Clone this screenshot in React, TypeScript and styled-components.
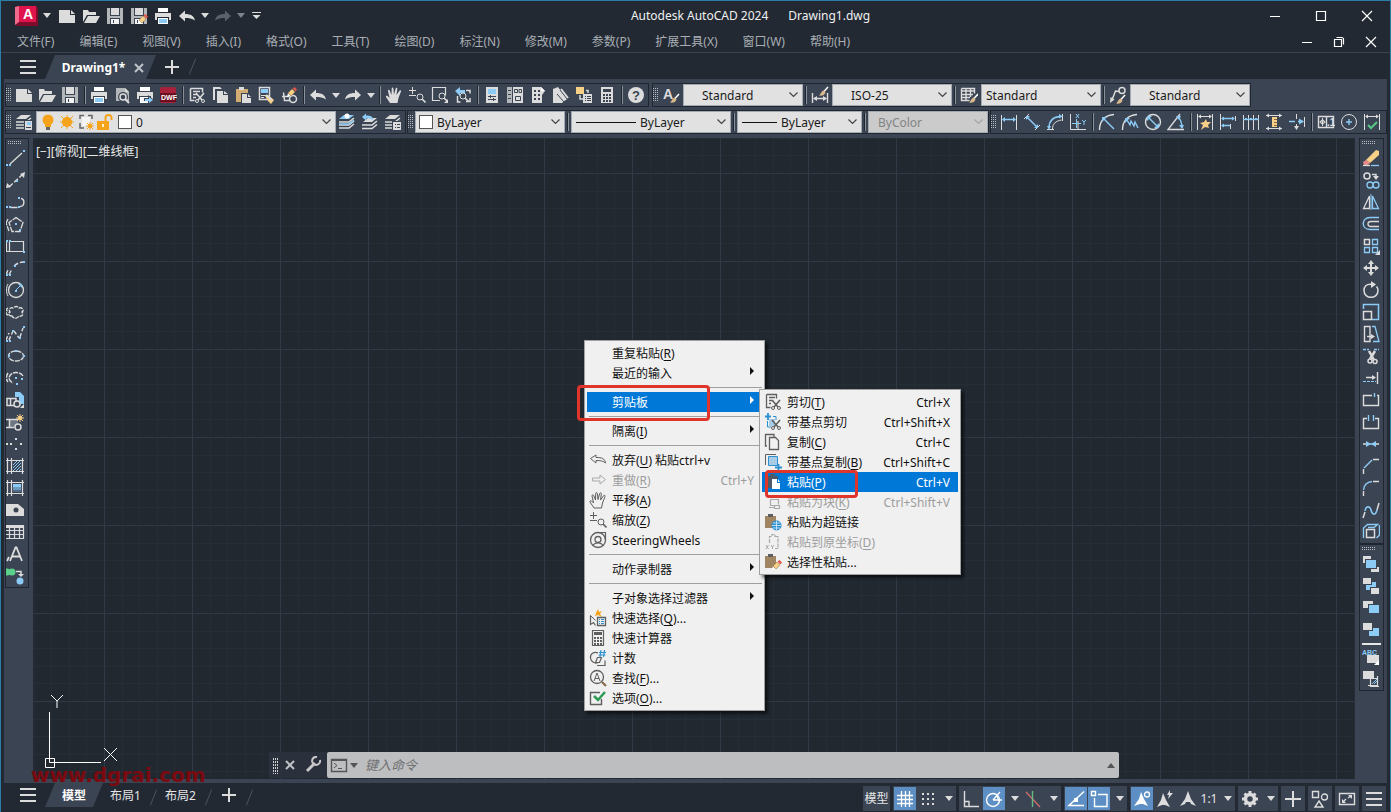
import React, { ReactNode } from "react";
import styled, { createGlobalStyle, css } from "styled-components";

const color = {
  frame: "#222933",
  slate: "#3b4453",
  edge: "#1f2630",
  canvas: "#212830",
  accent: "#5e8fc4",
  menu: "#f0f0f0",
  select: "#0078d7",
};

const W = "#dcdcdc";
const B = "#8ccbf5";
const Y = "#f7cf87";
const O = "#f5a31a";
const G = "#5f5f5f";
const K = "#2b8fd0";

const GlobalStyle = createGlobalStyle`
  * { box-sizing: border-box; }
  html, body { margin: 0; padding: 0; background: ${color.frame}; }
  body, button, select, input {
    font-family: "Noto Sans", "Noto Sans CJK SC", sans-serif;
    font-size: 12px;
    line-height: 16px;
  }
  button { border: 0; padding: 0; margin: 0; background: none; color: inherit; }
  ul { list-style: none; margin: 0; padding: 0; }
`;

/* ---------- drawing helpers ---------- */

const L = ({ d, c = W, w = 1, dash }: { d: string; c?: string; w?: number; dash?: string }) => (
  <path d={d} stroke={c} strokeWidth={w} strokeDasharray={dash} fill="none" />
);
const F = ({ d, c = W }: { d: string; c?: string }) => <path d={d} fill={c} />;
const R = ({ x, y, w, h, c = W }: { x: number; y: number; w: number; h: number; c?: string }) => (
  <rect x={x} y={y} width={w} height={h} fill={c} />
);
const Dots = ({ at, c = B }: { at: number[][]; c?: string }) => (
  <>
    {at.map(([x, y]) => (
      <rect key={`${x}-${y}`} x={x} y={y} width={2} height={2} fill={c} />
    ))}
  </>
);
const Lens = ({ x, y, c = W }: { x: number; y: number; c?: string }) => (
  <g stroke={c} fill="none">
    <circle cx={x} cy={y} r={3} />
    <path d={`M${x + 2} ${y + 2}l3.5 3.5`} strokeWidth={1.6} />
  </g>
);
const Pencil = ({ x, y }: { x: number; y: number }) => (
  <g transform={`translate(${x} ${y})`}>
    <path d="M0 10l1-4 3 3z" fill="#fff" />
    <path d="M1 6l4-4 3 3-4 4z" fill={Y} stroke="#8a6a3a" strokeWidth={0.5} />
    <path d="M5.500 1.500l2-1.500 2.500 2.500-1.500 2z" fill="#e2574c" />
  </g>
);
const Brush = ({ x, y }: { x: number; y: number }) => (
  <g transform={`translate(${x} ${y})`}>
    <path d="M9 0L5 4.500" stroke="#fff" strokeWidth={1.5} />
    <path d="M5 3.500l1.500 2C5.500 8.500 3 9 0 8.500 2 7.500 2 4 5 3.500z" fill="#d9b98c" />
  </g>
);
const Scissors = ({ x, y, c = W }: { x: number; y: number; c?: string }) => (
  <g transform={`translate(${x} ${y})`} stroke={c} fill="none">
    <path d="M1 0l6 7M9 0L3 7" strokeWidth={1.6} />
    <circle cx={2} cy={8} r={1.500} />
    <circle cx={8} cy={8} r={1.500} />
  </g>
);
const Sheets = ({ top = W }: { top?: string }) => (
  <>
    <F d="M6 2h10l-5 4H1z" c={top} />
    <L d="M1 9h10l5-4M1 12h10l5-4M1 15h10l5-4" w={1.6} />
  </>
);
const Spark = ({ x, y, c = Y, r = 4 }: { x: number; y: number; c?: string; r?: number }) => (
  <g>
    <circle cx={x} cy={y} r={r - 2} fill={c} />
    <path
      d={`M${x - r} ${y}h${2 * r}M${x} ${y - r}v${2 * r}M${x - r + 1} ${y - r + 1}l${2 * r - 2} ${2 * r - 2}M${x + r - 1} ${y - r + 1}l${2 - 2 * r} ${2 * r - 2}`}
      stroke={c}
    />
  </g>
);
const Floppy = () => (
  <>
    <R x={1} y={1} w={16} h={16} c="#b4b7ba" />
    <R x={4} y={1} w={10} h={8} c={color.slate} />
    <R x={5} y={1} w={8} h={7} c={W} />
    <R x={4} y={11} w={10} h={6} c={color.slate} />
    <R x={5} y={12} w={8} h={5} c="#f2f2f2" />
    <R x={7} y={13} w={1} h={3} c={color.slate} />
  </>
);
const Printer = ({ paper = B }: { paper?: string }) => (
  <>
    <R x={4} y={1} w={10} h={4} c="#fff" />
    <F d="M1 6h16v7h-2v-3H3v3H1z" />
    <R x={4} y={11} w={10} h={6} c="#fff" />
    <R x={5} y={12} w={8} h={4} c={paper} />
  </>
);
const Calculator = ({ c = W, k = color.slate }: { c?: string; k?: string }) => (
  <>
    <R x={3} y={1} w={12} h={16} c={c} />
    <R x={5} y={3} w={8} h={3} c={k} />
    {[8, 11, 14].map((y) =>
      [5, 8, 11].map((x) => <rect key={`${x}${y}`} x={x} y={y} width={2} height={2} fill={k} />)
    )}
  </>
);
const Letters = ({ x, y, s, c = W, children }: { x: number; y: number; s: number; c?: string; children: string }) => (
  <text x={x} y={y} fontSize={s} fontWeight={700} fill={c} fontFamily="Liberation Sans, sans-serif">
    {children}
  </text>
);
const UNDO = "M1 9l6-5.500v3.500c6 0 9 2 10 6.500-3-2-6-2.500-10-2.500v3.500z";
const REDO = "M17 9l-6-5.500v3.500c-6 0-9 2-10 6.500 3-2 6-2.500 10-2.500v3.500z";
const HAND =
  "M5 17L1 11c-.5-1 .8-1.800 1.600-1l2 2L3 5c-.2-1.200 1.300-1.600 1.700-.5L6.500 9 6.700 2.500c0-1.200 1.600-1.200 1.700 0L9 8.500l1.700-6c.3-1.100 1.800-.8 1.600.4L11.500 9l3-4.300c.7-1 2-.2 1.500.9L13.500 12l-1 5z";
const SHIP = "M9 1l3 8 5 7-5-2-1-2H7l-1 2-5 2 5-7z";

/* ---------- icon set ---------- */

const icons: Record<string, ReactNode> = {
  new: <F d="M1 3h11v5h5v8H1zM13 3l4 4h-4z" />,
  open: <F d="M1 3h5l1 2h7v3H5l-4 7zM6 9h12l-4 7H2z" />,
  save: <Floppy />,
  saveAs: <><Floppy /><Pencil x={8} y={7} /></>,
  print: <Printer />,
  preview: <><F d="M3 2h9l4 4v9H3z" c="#b4b7ba" /><F d="M12 2l4 4h-4z" /><circle cx={10} cy={11} r={5} fill={color.slate} /><circle cx={10} cy={11} r={3} fill="none" stroke={W} strokeWidth={1.500} /><L d="M12 13l4 4" w={2} /></>,
  publish: <><Printer paper="#f2f2f2" /><F d="M8 12h4V9l6 5-6 4v-3H8z" c={color.slate} /><F d="M9 13h4v-2l4 3-4 3v-2H9z" c={B} /></>,
  dwf: <><rect x={1} y={1} width={16} height={16} rx={2} fill="#a8213a" /><R x={1} y={7} w={16} h={9} c="#6b0f1f" /><Letters x={2} y={14} s={7} c="#fff">DWF</Letters></>,
  cut: <><L d="M2.500 2.500h12v4M2.500 2.500v12h4M5 5.500h7M5 8.500h4M5 11.500h3" w={1.500} /><Scissors x={7} y={7} /></>,
  copy: <><F d="M2 1h7l2 2H4v11H2z" /><F d="M6 5h6v4h5v8H6zM13 5l4 3h-4z" /></>,
  paste: <><F d="M2 3h12v4H7v9H2z" c="#d3ac74" /><R x={5} y={1} w={5} h={3} /><F d="M8 8h5v4h4v5H8zM14 8l3 3h-3z" /></>,
  match: <><L d="M2.500 1.500h10v12h-10z" w={1.500} /><R x={4} y={3} w={7} h={4} c={B} /><L d="M4 9.500h5M4 11.500h3" /><F d="M8 10l3-1 6 5-3 4-3-3z" c={Y} /><L d="M9 9l6 5" w={2} /></>,
  blockEdit: <><L d="M2 10.500h7M3.500 6.500l1 8h6" w={1.500} /><circle cx={13} cy={13} r={3.500} fill="none" stroke={W} strokeWidth={1.500} /><Pencil x={7} y={1} /></>,
  undo: <F d={UNDO} />,
  redo: <F d={REDO} />,
  redoDim: <F d={REDO} c="#5b616a" />,
  pan: <F d={HAND} />,
  zoomRt: <><L d="M4.500 1v7M1 4.500h7M1 9.500h7" /><Lens x={12} y={11} /></>,
  zoomWin: <><L d="M9 14.500H1.500v-13h13v8" w={1.200} /><Lens x={11} y={10} /><F d="M17 13v4h-4z" /></>,
  zoomPrev: <><L d="M3.500 10v6h3M12 15.500h4V12M12 4.500h4v3" w={1.500} /><F d="M1 5l5-4v3h5v3H6v3z" c={B} /><Lens x={9} y={10} /></>,
  props: <><R x={3} y={1} w={12} h={16} /><R x={5} y={3} w={8} h={5} c={B} /><L d="M5 10.500h8M5 13.500h8M7.500 9v3M10.500 12v3" c={color.slate} /></>,
  designCenter: <><R x={1} y={1} w={5} h={16} c="#b4b7ba" /><R x={7} y={1} w={10} h={16} /><L d="M8.500 3.500h3v3h-3zM13 3.500h2.500v3H13zM9.500 10.500h5v4h-5zM2 4.500h3M2 8.500h3M2 12.500h3" c={color.slate} /></>,
  palettes: <><F d="M3 1h9l4 4-3 4v8H3z" /><F d="M12 1l4 4h-4z" c="#fff" /><Dots c={color.slate} at={[[5, 4], [9, 4], [5, 8], [9, 8], [5, 12], [9, 12]]} /></>,
  sheetSet: <><F d="M1 3l5-2 9 12-5 4H1z" /><L d="M8 4l8 10c1 2-2 4-4 2L5 8" c={color.slate} /><L d="M9 3l7 9" w={2} /></>,
  markup: <><R x={1} y={1} w={8} h={7} c={Y} /><L d="M5 9v4h3M11 4.500h2V7" w={1.500} /><R x={8} y={8} w={9} h={9} /><L d="M10 10.500h1M12 10.500h4M10 12.500h1M12 12.500h4M10 14.500h1M12 14.500h4" c={color.slate} /></>,
  calc: <Calculator />,
  help: <><circle cx={9} cy={9} r={8} fill={W} /><Letters x={5} y={14} s={13} c={color.slate}>?</Letters></>,
  textStyle: <><Letters x={1} y={13} s={14}>A</Letters><Brush x={8} y={8} /></>,
  dimStyle: <><L d="M1.500 7v10M16.500 7v10M3 12.500h12" w={1.400} /><F d="M2 12.500l4-2.500v5zM16 12.500l-4-2.500v5z" /><Brush x={8} y={1} /></>,
  tableStyle: <><L d="M1.500 2.500h13v5M1.500 2.500v12h8M1 5h14M1 8.500h12M1 11.500h9M6 3v12M10.500 3v8" w={1.400} /><Brush x={9} y={8} /></>,
  leaderStyle: <><circle cx={13} cy={4.500} r={3} fill="none" stroke={W} strokeWidth={1.500} /><L d="M10 5.500L6.500 5 3 14" w={1.500} /><F d="M1 17l.5-6 4 2.500z" /><Brush x={7} y={9} /></>,

  layerProps: <><Sheets /><R x={9} y={7} w={9} h={11} c={color.slate} /><R x={10} y={8} w={7} h={9} /><R x={12} y={9} w={4} h={3} c={B} /><L d="M11 14.500h5" c={color.slate} /></>,
  bulb: <><circle cx={9} cy={7} r={5.500} fill={O} /><R x={6} y={11} w={6} h={3} c={O} /><R x={7} y={14} w={4} h={3} c="#666" /></>,
  sunBig: <><Spark x={9} y={9} c={O} r={7} /><circle cx={9} cy={9} r={4.500} fill={O} /></>,
  frame: <><L d="M3 6V2.500h4M11 2.500h4V6M3 10v5h4" c="#666" w={1.500} /><R x={5} y={4} w={8} h={9} c="#f4f4f4" /><Spark x={13} y={13} c={O} r={4} /></>,
  lock: <><R x={1} y={8} w={12} h={9} c={O} /><L d="M9.500 8V4.500c0-3.500 6-3.500 6 0V7" c={O} w={2} /><R x={6} y={11} w={2} h={3} c="#fff2cc" /></>,
  layerCur: <><Sheets top={B} /><circle cx={9} cy={3} r={2.500} fill="#fff" /><L d="M1 11h10l5-4" c={B} w={1.600} /></>,
  layerPrev: <><F d="M7 5h9l-5 4H2z" /><L d="M1 12h10l5-4M1 15.500h10l5-4" w={1.600} /><F d="M1 4l4-3.500v2c5 0 7 1 7 4.500-2-1.500-4-1.500-7-1.500v2z" c={B} /></>,
  layerState: <><Sheets /><R x={8} y={8} w={10} h={10} c={color.slate} /><R x={9} y={9} w={8} h={8} /><L d="M11 11.500h1M13 11.500h3M11 14.500h1M13 14.500h3" c={color.slate} /></>,

  dimLinear: <><L d="M1.500 2v15M16.500 2v15" /><L d="M3 6.500h12" c={B} w={1.500} /><F d="M2 6.500l3-2.500v5zM16 6.500l-3-2.500v5z" c={B} /></>,
  dimAligned: <><L d="M6 1L1 6M17 12l-5 5" /><L d="M4 4l10 10" c={B} w={1.500} /><F d="M3 3h4L3 7zM15 15v-4l-4 4z" c={B} /></>,
  dimArc: <><L d="M1 16.500h7M16.500 1v7M6.500 16c0-5 3-8 9-9" /><L d="M3 15C3 8 7 4 14 3.500" c={B} w={1.400} /><F d="M1 13h4l-2 4zM13 1l4 2.500-4 2z" c={B} /></>,
  dimOrd: <><L d="M1.500 1v15.500H17M9 16V8" /><L d="M7.500 6v9M3 10.500h9M7 1l3 4M10 1L7 5M13 7l2 2 2-2M15 9v3" c={B} /></>,
  dimRad: <><L d="M1.500 17C1.500 8 7 2 16 1.500" w={1.400} /><L d="M6 6l10 10" c={B} w={1.400} /><F d="M4 4h5L4 9z" c={B} /></>,
  dimJog: <><L d="M1.500 17C1.500 8 7 2 16 1.500" w={1.400} /><L d="M6 7l3 5 1-4 3 5 1-4 3 6" c={B} w={1.400} /><F d="M4 5h5l-5 5z" c={B} /></>,
  dimDia: <><circle cx={9} cy={9} r={7.500} fill="none" stroke={W} strokeWidth={1.400} /><L d="M5 5l8 8" c={B} w={1.400} /><F d="M3 3h5L3 8zM15 15v-5l-5 5z" c={B} /></>,
  dimAng: <><L d="M13 1L1 16.500h16" w={1.400} /><L d="M11 4c3 3 4 6 4 11" c={B} w={1.400} /><F d="M9 3h5l-2 4zM12 12h5l-2 4z" c={B} /></>,
  quickDim: <><L d="M1.500 1v16M16.500 1v16M3 3.500h12" /><F d="M2 3.500l3-2v4zM16 3.500l-3-2v4z" /><F d="M10 6l1 3 4 0-3 3 1 3-4-1-4 3 2-5-3-2 4-1z" c={Y} /></>,
  dimBase: <><L d="M1.500 1v16M16.500 3v5M11.500 11v5" /><L d="M3 5.500h12M3 12.500h8" c={B} w={1.400} /><F d="M2 5.500l3-2v4zM16 5.500l-3-2v4zM2 12.500l3-2v4z" c={B} /></>,
  dimCont: <><L d="M1.500 2v15M6.500 2v15M11.500 2v15M16.500 2v15" /><L d="M1 6.500h16" c={B} w={1.400} /><Dots at={[[3, 5], [8, 5], [13, 5]]} /></>,
  dimSpace: <><L d="M1 2.500h16M1 15.500h16" /><F d="M1 2.500l3-2v4zM17 2.500l-3-2v4zM1 15.500l3-2v4zM17 15.500l-3-2v4z" /><R x={7} y={4} w={5} h={10} c={Y} /><L d="M9 6.500h3M9 9.500h3M9 12.500h3" c="#8a6a3a" /></>,
  dimBreak: <><L d="M8.500 1v5M8.500 11v5M16.500 4v10" /><L d="M1 8.500h6M10 8.500h5" c={B} w={1.400} /><F d="M6 13h5l-2.500 4z" /><F d="M16 8.500l-5-3v6z" c={B} /></>,
  tolerance: <><L d="M1.500 3.500h15v11h-15zM9.500 3v12" w={1.400} /><circle cx={5.500} cy={9} r={2} fill="none" stroke={W} /><L d="M5.500 5v8M2.500 9h6" /><Letters x={10} y={13} s={10}>.1</Letters></>,
  center: <><circle cx={9} cy={9} r={7.500} fill="none" stroke={W} /><L d="M9 6v6M6 9h6" c={B} w={1.400} /></>,
  inspect: <><L d="M1.500 1v16M16.500 1v16M3 3.500h12" /><F d="M2 3.500l3-2v4zM16 3.500l-3-2v4z" /><L d="M5 12l3 3 6-6" c="#57c785" w={2} /></>,

  line: <><L d="M3 15L15 4" w={1.300} /><Dots at={[[16, 1], [2, 15], [-1, 15]]} /></>,
  xline: <><L d="M2 16L15 4" w={1.400} dash="5 2" /><F d="M18 1l-1 6-4-4zM-1 17l1-5 4 4z" /><Dots at={[[9, 9]]} /></>,
  pline: <><L d="M3.500 14.500h7M13 13.500c5 0 5-8 1-8" w={1.400} /><Dots at={[[-1, 13], [2, 13], [11, 13], [11, 4]]} /></>,
  polygon: <><L d="M9 2.500l7 5-3 9H5l-3-9zM1 4l-2 4 3 8" w={1.300} dash="7 1" /><Dots at={[[8, 8], [12, 14]]} /></>,
  rect: <><L d="M2.500 4.500h14v10h-14zM1 4.500h-1.500v10H2" w={1.200} /><Dots at={[[-1, 3], [2, 3], [16, 14]]} /></>,
  arc: <><L d="M2 16l3-6M-1 16l2-5M7 7c2-2 5-3.500 9-4" w={1.400} dash="5 2" /><Dots at={[[16, 2], [7, 6], [2, 15], [-1, 15]]} /></>,
  circle: <><circle cx={9} cy={9} r={7.500} fill="none" stroke={W} strokeWidth={1.300} /><L d="M1 3c-2 3-2 9 0 12" /><L d="M9 9l4-4" c={B} /><F d="M15 3v4l-4-4z" c={B} /><Dots at={[[8, 9]]} /></>,
  cloud: <L d="M5 13c-4 0-4-3-2-4-2-3 1-5 3-4 2-2 5-2 6 0 4-1 5 3 3 4 2 3-1 5-3 4-2 3-5 3-7 0zM1 12c-3-1-2-3-1-4-1-2 0-3 2-3" w={1.400} dash="4 1" />,
  spline: <><L d="M2 15l4-9M-1 15l3-7M7 6l5 7M13 12l3-9" w={1.400} dash="4 2" /><Dots at={[[16, 1], [5, 5], [12, 12], [2, 15], [-1, 15]]} /></>,
  ellipse: <><ellipse cx={9} cy={9} rx={7.500} ry={5} fill="none" stroke={W} strokeWidth={1.300} strokeDasharray="5 1" /><Dots at={[[8, 3], [16, 8], [1, 8]]} /></>,
  ellArc: <><L d="M16 7C13 2 3 2 2 9c0 2 2 4 4 5M1 4c-2 3-2 7 0 9" w={1.400} dash="5 1" /><Dots at={[[8, 8], [14, 9], [9, 14]]} /></>,
  insert: <><F d="M8 1h5l4 4v8h-5V6H8z" c={B} /><L d="M0 7.500h9v7H0zM3.500 8v6" w={1.500} /><circle cx={10} cy={13} r={3} fill={color.slate} stroke={W} strokeWidth={1.500} /><F d="M17 13v4h-4z" /></>,
  block: <><R x={3} y={6} w={8} h={8} c="#6d7683" /><L d="M-1 6.500h12M-1 14.500h8M2.500 6v8" w={1.500} /><circle cx={11} cy={14} r={3} fill={color.slate} stroke={W} strokeWidth={1.500} /><Spark x={13} y={5} /></>,
  point: <Dots c={W} at={[[8, 3], [8, 13], [3, 8], [13, 8], [-1, 8]]} />,
  hatch: <><L d="M-1 3.500h18M-1 14.500h18M4.500 1v16M15.500 1v16M.5 1v16" w={1.200} /><L d="M6 8l4-4M6 11l7-7M6 14l8-8M9 14l5-5M12 14l2-2" c={B} /></>,
  gradient: <><L d="M-1 3.500h18M-1 14.500h18M4.500 1v16M15.500 1v16M.5 1v16" w={1.200} /><R x={6} y={5} w={8} h={3} c={B} /><R x={6} y={8} w={8} h={3} c="#6d9abf" /><R x={6} y={11} w={8} h={2} c="#516a85" /></>,
  region: <><F d="M-1 3h12l6 5v7H-1z" /><circle cx={9} cy={9} r={2.500} fill={color.slate} /></>,
  table: <><R x={-1} y={2} w={18} h={3} /><L d="M-1 7.500h18M-1 11.500h18M-1 15.500h18M2.500 3v13M7.500 3v13M12.500 3v13M16.500 3v13" w={1.200} /></>,
  mtext: <><L d="M3 16L8.500 2.500h1L15 16M5 11.500h8M0 16l2-4" w={1.800} /></>,
  addSel: <><circle cx={5} cy={5} r={3.500} fill="#5cd08a" /><circle cx={0} cy={5} r={3.500} fill="#5cd08a" /><circle cx={13} cy={14} r={3.500} fill={B} /><L d="M9 4.500h5V8" w={1.500} /><F d="M11 7h6l-3 3z" /></>,

  erase: <><F d="M14 1l3 1v4L8 14l-4-3z" c={Y} /><F d="M4 11l4 3-3 3-3-1-1-3z" c="#e58a8a" /><L d="M1 16.500h7" w={1.300} /><L d="M9 16.500h8" c={B} w={1.300} /></>,
  copyObj: <><circle cx={5} cy={5} r={3} fill="none" stroke={W} strokeWidth={1.500} /><circle cx={8} cy={14} r={3} fill="none" stroke={B} strokeWidth={1.300} /><circle cx={14} cy={14} r={3} fill="none" stroke={B} strokeWidth={1.300} /><L d="M10 3.500h4V6" w={1.500} /><F d="M11 5h6l-3 4z" /></>,
  mirror: <><L d="M7.500 3v12.500H1.500z" w={1.300} /><L d="M10.500 3v12.500h6z" c={B} w={1.300} /><L d="M9 1v16" c={B} /></>,
  offset: <><L d="M17 2.500H8c-9 0-9 12 0 12h9" c={B} w={1.400} /><L d="M17 6.500H9c-4 0-4 5 0 5h8" w={1.300} /></>,
  array: <><L d="M2.500 2.500h5v5h-5z" w={1.500} /><L d="M10.500 2.500h5v5h-5zM2.500 10.500h5v5h-5zM10.500 10.500h5v5h-5z" c={B} w={1.300} /><F d="M18 13v5h-5z" /></>,
  move: <><L d="M9 3v12M3 9h12" w={2} /><F d="M9 1l3 4H6zM9 17l3-4H6zM1 9l4-3v6zM17 9l-4-3v6z" /></>,
  rotate: <><L d="M10 3.500C4 2.500 2 6 2 9.500c0 9 14 9 14 0 0-2-.5-3-1.500-4" w={1.500} /><F d="M9 0l5 3.500L9 7z" /></>,
  scale: <><L d="M1.500 6V1.500h15v15H10" c={B} w={1.500} /><L d="M1.500 8.500h8v8h-8z" w={1.500} /></>,
  stretch: <><L d="M8 1.500H2.500v15H8z" w={1.400} /><L d="M10 1.500h3l4 15h-6" c={B} w={1.300} /><L d="M5 11.500h6" w={1.400} /><F d="M9 9l4 2.500L9 14z" /></>,
  trim: <><L d="M1 2.500h6M12 2.500h5" c={B} w={1.300} dash="3 1" /><L d="M7 4l5 9M13 4L8 12" w={2.500} /><circle cx={8} cy={14} r={2} fill="none" stroke={W} strokeWidth={1.500} /><circle cx={13} cy={14.500} r={2} fill="none" stroke={W} strokeWidth={1.500} /></>,
  extend: <><L d="M4 8.500h8M15.500 3v12" w={1.400} /><F d="M10 6l4 2.500-4 2.500z" /><L d="M1 12.500h13" c={B} dash="3 1" /></>,
  breakPt: <><L d="M10 4.500H1.500v10h15v-10H15" w={1.400} /><L d="M12.500 2v4" c={B} w={1.400} /></>,
  breakObj: <><L d="M5 5.500H1.500v10h15v-10H13" w={1.400} /><L d="M6.500 2v6M11.500 2v6" c={B} w={1.400} /></>,
  join: <><L d="M1 9h4M13 9h4" w={1.400} /><L d="M5 9h8" c={B} w={1.400} /><F d="M4 6l5 3-5 3zM14 6L9 9l5 3z" c={B} /></>,
  chamfer: <><L d="M11 2.500h6M1.500 12v5" w={1.400} /><L d="M2 11l8-8" c={B} w={1.400} /></>,
  fillet: <><L d="M11 2.500h6M1.500 12v5" w={1.400} /><L d="M1.500 11C2 6 5 3 10 2.500" c={B} w={1.400} /></>,
  blend: <><L d="M1 17l2-6M15 9l2-7" w={1.500} /><L d="M3 10c1-6 5-5 6-1s4 7 6 0" c={B} w={1.500} /></>,
  explode: <><L d="M4.500 6.500h8v8h-8z" w={1.500} /><L d="M1.500 15V5l4-3.500h10L12 4.500H6M17.500 2v10l-3 3" c={B} w={1.400} /></>,
  front: <><F d="M1 1h8v3H5v4H1zM9 14h8v3h-8z" /><R x={9} y={12} w={8} h={5} /><R x={3} y={4} w={12} h={10} c={color.slate} /><R x={4} y={5} w={10} h={8} c={B} /></>,
  back: <><R x={4} y={5} w={10} h={8} c={B} /><R x={1} y={1} w={9} h={7} c={color.slate} /><R x={1} y={1} w={8} h={6} /><R x={8} y={10} w={9} h={7} c={color.slate} /><R x={9} y={11} w={8} h={6} /></>,
  above: <><R x={1} y={2} w={10} h={7} /><R x={6} y={5} w={11} h={9} c={color.slate} /><R x={7} y={6} w={10} h={8} c={B} /></>,
  below: <><R x={7} y={7} w={10} h={8} c={B} /><R x={1} y={2} w={10} h={8} c={color.slate} /><R x={1} y={2} w={9} h={7} /></>,
  textFront: <><R x={5} y={7} w={12} h={8} /><F d="M17 12v5h-5z" c="#fff" /><Letters x={0} y={7} s={7} c={B}>ABC</Letters></>,
  hatchBack: <><R x={1} y={1} w={11} h={8} /><L d="M8.500 7v9.500H17M6 15.500h10M15.500 6v11M7 8.500h9" w={1.200} /><L d="M10 14l5-5M12 14l3-3" c={B} /></>,

  mCut: <><L d="M2.500 1.500h10v4M2.500 1.500v13h4M5 4.500h6M5 7.500h3M5 10.500h2" c={G} w={1.300} /><Scissors x={7} y={7} c={G} /></>,
  mCutBase: <><L d="M4 0v7M1 3.500h6" c={K} w={1.800} /><L d="M3.500 8v6H7M9 3.500h3V7" c={K} /><R x={5} y={6} w={6} h={7} c="#a8cbe6" /><Scissors x={7} y={7} c={G} /></>,
  mCopy: <><L d="M3 13H1.500V1.500H10V4" c={G} w={1.300} /><L d="M5.500 4.500h6l3 3v9h-9z" c={G} w={1.300} /></>,
  mCopyBase: <><L d="M1.500 12V1.500H12" c={G} /><L d="M4.500 3.500h9v9h-9z" c={K} /><R x={5} y={4} w={8} h={8} c="#a8cbe6" /><L d="M14.500 11v6M11 14.500h7" c={K} w={1.800} /></>,
  mPaste: <><F d="M4 3h10v3H8v9H4z" c="#4e5a68" /><R x={6} y={1} w={5} h={3} c="#4e5a68" /><F d="M8 6h5v4h3v6H8zM14 6l2 3h-2z" c="#fff" /></>,
  mBlock: <L d="M6.500 6.500h8v5M6.500 6.500v6h4M5 14.500h5M10.500 12.500h5v3h-5z" c="#a9a9a9" w={1.200} />,
  mLink: <><R x={1} y={3} w={11} h={12} c="#a08562" /><R x={4} y={1} w={5} h={3} c={G} /><circle cx={12.500} cy={12.500} r={5} fill={K} /><L d="M8 12.500h9M12.500 8v9M9 10h7M9 15h7" c="#dff0fb" w={0.800} /></>,
  mOrig: <><L d="M5.500 10V3.500h2M11 3.500h3v12h-3M8 3V1.500h3V4" c="#a9a9a9" w={1.200} dash="4 1" /><L d="M2 12l2.500 4M4.500 12L2 16M7 12l1.500 2L10 12M8.500 14v2" c="#a9a9a9" /></>,
  mSpecial: <><R x={1} y={3} w={11} h={12} c="#a08562" /><R x={4} y={1} w={5} h={3} c={G} /><Pencil x={8} y={7} /></>,
  mUndo: <L d="M1.500 7.500L7 4v2.500c6 0 9 1 9.500 5.500-2-2-5-2.500-9.500-2.500V12z" c={G} />,
  mRedo: <L d="M16.500 8.500L11 4v3H3.500v3H11v3z" c="#a9a9a9" />,
  mPan: <L d={HAND} c={G} />,
  mZoom: <><L d="M4.500 1v7M1 4.500h7M1 9.500h7" c={G} /><Lens x={12} y={11} c={G} /></>,
  mWheel: <><circle cx={9} cy={9} r={7.500} fill="none" stroke={G} strokeWidth={1.300} /><circle cx={9} cy={8.500} r={3} fill="none" stroke={G} strokeWidth={1.300} /><L d="M9 1.500h7.500V9M4 15c1-4 9-4 10 0" c={G} w={1.200} /></>,
  mQuick: <><F d="M9 0l1 3 3-1-2 3 2 3-4-2-3 1 1-3z" c={O} /><L d="M1.500 6.500v9l3-2 2 3" c={G} w={1.200} /><L d="M1.500 6.500l5 5" c={G} /><L d="M8.500 8.500h8v8h-8z" c={G} w={1.300} /><L d="M10 10.500h1M12 10.500h3M10 12.500h1M12 12.500h3M10 14.500h1M12 14.500h3" c={K} /></>,
  mCalc: <><L d="M3.500 1.500h11v15h-11z" c={G} w={1.200} /><R x={5} y={3} w={8} h={3} c={G} /><Dots c={G} at={[[5, 8], [8, 8], [11, 8], [5, 11], [8, 11], [11, 11], [5, 14], [8, 14], [11, 14]]} /></>,
  mCount: <><L d="M9 4c-4-2-8 1-7.500 5S6 15 9 13.500M8.500 8.500h4l-2 5H6.500zM8 16.500h8v-5" c={G} w={1.200} /><L d="M12 1l-1 7M15.500 1l-1 7M10 3.500h7M9.500 6h7" c={K} w={1.200} /></>,
  mFind: <><circle cx={8} cy={8} r={6.500} fill="none" stroke={G} strokeWidth={1.300} /><L d="M5 12L8 4l3 8M6 9.500h4" c={G} /><L d="M13 13l4 4" c="#8a6a4a" w={2.200} /></>,
  mOptions: <><L d="M11 3.500H1.500v12h11V10" c={G} w={1.400} /><L d="M5 7l4 4 7-8" c="#2e9b55" w={2.500} /></>,

  sGrid: <L d="M5.500 1v16M9.500 1v16M13.500 1v16M1 5.500h16M1 9.500h16M1 13.500h16" c="#fff" w={1.300} />,
  sSnap: <Dots c={W} at={[[3, 3], [8, 3], [13, 3], [3, 8], [8, 8], [13, 8], [3, 13], [8, 13], [13, 13]]} />,
  sOrtho: <L d="M2.500 1v15.500H17M3 11.500h4V16" w={1.400} />,
  sPolar: <><circle cx={8} cy={10} r={6.500} fill="none" stroke="#fff" strokeWidth={1.400} /><L d="M8 10h9M8 10l7-8M12 6l2 5" c="#fff" w={1.300} /></>,
  sIso: <><L d="M2 2l14 15" c="#c96a6a" w={1.400} /><L d="M8.500 1v16" c="#68b884" w={1.400} /></>,
  sTrack: <><L d="M17 1.500L2 15.500h15" c="#fff" w={1.500} /><F d="M7 8h4v4H7z" c="#fff" /></>,
  sOsnap: <><L d="M8 4.500h9v12H4.500V8" c="#fff" w={1.400} /><L d="M1.500 1.500h4v4h-4z" c="#fff" w={1.400} /></>,
  sAnno: <><F d="M8 2l3 7 4 7-5-2H7l-6 2 5-7z" c="#fff" /><circle cx={14} cy={4.500} r={2.500} fill="none" stroke="#fff" strokeWidth={1.300} /></>,
  sAuto: <><F d="M7 3l3 7 4 7-5-2H6l-5 2 4-7z" /><F d="M14 0l-3 5h2l-1 4 5-6h-3z" /></>,
  sScale: <F d={SHIP} />,
  sGear: <><circle cx={9} cy={9} r={4.500} fill="none" stroke={W} strokeWidth={3.500} /><L d="M9 1v2.500M9 14.500V17M1 9h2.500M14.500 9H17M3.500 3.500l2 2M12.500 12.500l2 2M3.500 14.500l2-2M12.500 5.500l2-2" w={3} /></>,
  sPlus: <L d="M9 1v16M1 9h16" w={2} />,
  sShapes: <><L d="M1.500 1.500h6v6h-6zM8 11l4 6H4z" w={1.400} /><circle cx={13.500} cy={7} r={3} fill="none" stroke={W} strokeWidth={1.300} /></>,
  sFull: <><L d="M1.500 3.500h15v11h-15zM5 12l3-3M10 8l3-2" w={1.400} /><F d="M14 5v4l-4-4zM4 13V9l4 4z" /></>,
  sMenu: <L d="M1 3h16M1 9h16M1 15h16" w={2} />,
  plus: <L d="M9 2v14M2 9h14" w={2} />,
  close: <L d="M5 5l8 8M13 5l-8 8" c="#c0c3c7" w={2} />,
  wrench: <><L d="M3 15l8-8" c="#c8c8c8" w={3} /><L d="M16 4a4 4 0 1 1-3-3" c="#c8c8c8" w={2} /></>,
  prompt: <><L d="M1.500 3.500h15v12h-15z" c="#555" w={1.400} /><R x={1} y={3} w={16} h={2} c="#555" /><L d="M4 7l3 2.500L4 12M8 12.500h4" c="#555" /></>,
  winMin: <L d="M4 9.500h10" c="#fff" />,
  winMax: <L d="M4.500 4.500h9v9h-9z" c="#fff" w={1.200} />,
  winRestore: <L d="M4.500 6.500h7v7h-7zM6.500 4.500h5c1 0 2 1 2 2v5" c="#fff" w={1.200} />,
  winClose: <L d="M4 4l10 10M14 4L4 14" c="#fff" w={1.200} />,
};

const Svg = styled.svg`
  display: block;
  flex: none;
  overflow: hidden;
`;

const Icon = ({ name, bleed }: { name: string; bleed?: boolean }) =>
  bleed ? (
    <Svg width="19" height="18" viewBox="-1 0 19 18" aria-hidden="true">{icons[name]}</Svg>
  ) : (
    <Svg width="18" height="18" viewBox="0 0 18 18" aria-hidden="true">{icons[name]}</Svg>
  );

const Caret = styled.span<{ $c?: string }>`
  border: 4px solid transparent;
  border-top: 5px solid ${(p) => p.$c ?? W};
  border-bottom: 0;
`;

/* ---------- window frame ---------- */

const Window = styled.div`
  display: flex;
  flex-direction: column;
  min-height: 100vh;
  border: 1px solid #2a7fa8;
  border-bottom: 0;
  background: ${color.frame};
  color: #e6e6e6;
`;

const TitleBar = styled.header`
  display: grid;
  grid-template-columns: 1fr auto 1fr;
  align-items: center;
  height: 29px;
  padding: 0 0 0 14px;
`;
const QuickAccess = styled.div`
  display: flex;
  align-items: center;
`;
const AppButton = styled.button`
  width: 23px;
  height: 22px;
`;
const QuickButton = styled.button<{ $w?: number }>`
  display: flex;
  align-items: center;
  justify-content: center;
  width: ${(p) => p.$w ?? 24}px;
  height: 24px;
`;
const Title = styled.h1`
  display: flex;
  gap: 20px;
  margin: 0;
  padding-left: 96px;
  font-size: 12px;
  font-weight: 400;
  color: #f0f0f0;
`;
const WindowControls = styled.div<{ $w: number }>`
  display: flex;
  justify-content: flex-end;
  button {
    display: flex;
    align-items: center;
    justify-content: center;
    width: ${(p) => p.$w}px;
    height: 24px;
  }
`;
const MenuBar = styled.nav`
  display: flex;
  align-items: center;
  justify-content: space-between;
  height: 23px;
  padding: 2px 3px 0 16px;
  border-bottom: 1px solid #3a4350;
  ul { display: flex; gap: 25px; }
  button { color: #a9aeb4; white-space: nowrap; }
`;
const FileTabs = styled.div<{ $bottom?: boolean }>`
  display: flex;
  align-items: ${(p) => (p.$bottom ? "flex-start" : "flex-end")};
  height: ${(p) => (p.$bottom ? 29 : 26)}px;
`;
const Burger = styled.button`
  display: flex;
  align-items: center;
  width: 44px;
  height: 24px;
  padding-left: 18px;
`;
const FileTab = styled.button<{ $w: number; $pad?: number }>`
  display: flex;
  align-items: center;
  justify-content: center;
  gap: 5px;
  width: ${(p) => p.$w}px;
  height: 24px;
  padding: 1px 0 0 ${(p) => p.$pad ?? 0}px;
  background: ${color.slate};
  clip-path: polygon(10px 0, 100% 0, calc(100% - 10px) 100%, 0 100%);
  font-weight: 700;
  color: #fff;
`;
const LayoutTab = styled.button`
  height: 24px;
  padding: 1px 8px 0 7px;
  white-space: nowrap;
`;
const AddTab = styled.button`
  display: flex;
  align-items: center;
  justify-content: center;
  width: 32px;
  height: 24px;
`;
const Slash = styled.span`
  align-self: center;
  width: 1px;
  height: 17px;
  margin: 0 4px;
  background: #4a5361;
  transform: rotate(22deg);
`;

/* ---------- toolbars ---------- */

const Body = styled.main`
  flex: 1;
  display: flex;
  flex-direction: column;
  margin: 0 3px;
  background: ${color.slate};
`;
const ToolbarRows = styled.div`
  display: flex;
  flex-direction: column;
  gap: 3px;
  padding: 4px 0 4px 1px;
`;
const ToolbarRow = styled.div<{ $gap: number }>`
  display: flex;
  gap: ${(p) => p.$gap}px;
`;
const Panel = styled.div<{ $vertical?: boolean; $grow?: boolean }>`
  display: flex;
  flex: ${(p) => (p.$grow ? "1" : "none")};
  flex-direction: ${(p) => (p.$vertical ? "column" : "row")};
  border: 1px solid ${color.edge};
  background: ${color.slate};
  ${(p) => (p.$vertical ? "overflow: hidden;" : "height: 24px;")}
`;
const Grip = styled.span<{ $vertical?: boolean }>`
  flex: none;
  background-image: linear-gradient(${color.slate} 1px, transparent 1px),
    linear-gradient(90deg, #b6bbc2 1px, transparent 1px);
  background-size: 2px 2px;
  ${(p) =>
    p.$vertical
      ? css`width: 13px; height: 5px; margin: 1px 0 2px 2px;`
      : css`width: 5px; height: 14px; margin: 3px 2px 0 0;`}
`;
const ToolButton = styled.button`
  flex: none;
  width: 23px;
  height: 22px;
  padding: 2px 3px 2px 2px;
`;
const RailButton = styled.button<{ $bleed?: boolean }>`
  flex: none;
  height: 22px;
  padding: 2px 0 2px ${(p) => (p.$bleed ? 0 : 2)}px;
`;
const Drop = styled.button`
  display: flex;
  align-items: center;
  justify-content: center;
  width: 12px;
  height: 22px;
`;
const Separator = styled.span`
  flex: none;
  width: 2px;
  height: 18px;
  margin: 2px;
  border-left: 1px solid ${color.edge};
  border-right: 1px solid #8a9099;
`;
const RailRule = styled.span`
  height: 2px;
  margin: 2px 2px 1px;
  background: #e6e6e6;
`;
const Combo = styled.label<{ $w: number; $off?: boolean; $pad?: number }>`
  display: flex;
  flex: none;
  align-items: center;
  gap: 4px;
  width: ${(p) => p.$w}px;
  height: 22px;
  padding: 0 4px 0 ${(p) => p.$pad ?? 3}px;
  border: 1px solid #a4aab1;
  background: ${(p) => (p.$off ? "#cbcbcb" : "#e1e1e1")};
  select {
    flex: 1;
    min-width: 0;
    height: 20px;
    padding: 2px 0 0;
    border: 0;
    appearance: none;
    background: transparent;
    color: ${(p) => (p.$off ? "#838383" : "#1a1a1a")};
    opacity: 1;
  }
`;
const LayerMarks = styled.span`
  display: flex;
  gap: 1px;
`;
const Swatch = styled.span`
  width: 14px;
  height: 14px;
  border: 1px solid #555;
  background: #fff;
`;
const Stroke = styled.span<{ $w: number }>`
  width: ${(p) => p.$w}px;
  height: 1px;
  background: #111;
`;

type ComboProps = { label: string; value: string; w: number; pad?: number; off?: boolean; children?: ReactNode };
const ComboBox = ({ label, value, w, pad, off, children }: ComboProps) => (
  <Combo $w={w} $pad={pad} $off={off}>
    {children}
    <select aria-label={label} disabled={off} defaultValue={value}>
      <option>{value}</option>
    </select>
    <Svg width="9" height="6" viewBox="0 0 9 6" aria-hidden="true">
      <path d="M.5.500l4 4 4-4" fill="none" stroke={off ? "#a5a5a5" : "#444"} strokeWidth="1.200" />
    </Svg>
  </Combo>
);

const Tools = ({ names }: { names: string[] }) => (
  <>
    {names.map((n, i) =>
      n === "|" ? (
        <Separator key={i} />
      ) : n === "v" ? (
        <Drop key={i} aria-label="more"><Caret /></Drop>
      ) : (
        <ToolButton key={i} aria-label={n}><Icon name={n} /></ToolButton>
      )
    )}
  </>
);

const standardTools =
  "new open save | print preview publish dwf | cut copy paste match blockEdit | undo v redo v | pan zoomRt zoomWin zoomPrev | props designCenter palettes sheetSet markup calc | help".split(" ");
const dimTools =
  "dimLinear dimAligned dimArc dimOrd | dimRad dimJog dimDia dimAng | quickDim dimBase dimCont dimSpace dimBreak | tolerance center inspect".split(" ");
const drawTools =
  "line xline pline polygon rect arc circle cloud spline ellipse ellArc insert block point hatch gradient region table mtext addSel".split(" ");
const modifyTools =
  "erase copyObj mirror offset array move rotate scale stretch trim extend breakPt breakObj join chamfer fillet blend explode".split(" ");
const orderTools = "front back above below | textFront hatchBack".split(" ");

const RailTools = ({ names, bleed }: { names: string[]; bleed?: boolean }) => (
  <>
    {names.map((n, i) =>
      n === "|" ? (
        <RailRule key={i} />
      ) : (
        <RailButton key={i} aria-label={n} $bleed={bleed}><Icon name={n} bleed={bleed} /></RailButton>
      )
    )}
  </>
);

/* ---------- workspace ---------- */

const Workspace = styled.div`
  flex: 1;
  display: flex;
  align-items: stretch;
  padding-bottom: 4px;
`;
const Rail = styled.aside<{ $w: number; $side: "left" | "right" }>`
  flex: none;
  display: flex;
  flex-direction: column;
  width: ${(p) => p.$w}px;
  padding: ${(p) => (p.$side === "left" ? "0 4px 0 1px" : "0 3px 0 4px")};
`;
const minor = "#262d37";
const major = "#313946";
const gridStops = `${major} 0 1px, transparent 1px 18px, ${minor} 18px 19px, transparent 19px 35px, ${minor} 35px 36px, transparent 36px 53px, ${minor} 53px 54px, transparent 54px 70px, ${minor} 70px 71px, transparent 71px`;
const Canvas = styled.section`
  position: relative;
  flex: 1;
  min-width: 0;
  background-color: ${color.canvas};
  background-image: linear-gradient(to right, ${gridStops}), linear-gradient(to bottom, ${gridStops});
  background-size: 88px 88px;
  background-position: 71px 35px;
`;
const ViewLabel = styled.div`
  padding: 6px 3px;
  color: #e8e8e8;
`;
const Ucs = styled.svg`
  position: absolute;
  left: 8px;
  bottom: 8px;
`;
const Watermark = styled.div`
  position: absolute;
  z-index: 2;
  left: -2px;
  bottom: -8px;
  font: 700 20px/24px "DejaVu Sans", sans-serif;
  color: #7b0a10;
`;
const CommandBar = styled.form`
  position: absolute;
  left: 236px;
  right: 236px;
  bottom: 1px;
  display: flex;
  height: 26px;
`;
const CommandHandle = styled.div`
  display: flex;
  align-items: center;
  gap: 5px;
  width: 58px;
  padding-left: 4px;
  background: #2a303c;
  button { width: 18px; height: 18px; }
`;
const CommandGrip = styled.span`
  width: 5px;
  height: 17px;
  margin-right: -2px;
  background-image: linear-gradient(#2a303c 1px, transparent 1px),
    linear-gradient(90deg, #d0d0d0 1px, transparent 1px);
  background-size: 2px 3px;
`;
const CommandField = styled.label`
  flex: 1;
  display: flex;
  align-items: center;
  gap: 2px;
  padding: 0 4px 0 3px;
  background: #bdbec0;
  border-radius: 2px;
  input {
    flex: 1;
    margin-left: 5px;
    padding: 0;
    border: 0;
    background: transparent;
    font-size: 13px;
    font-style: italic;
  }
  input::placeholder { color: #6e6f71; opacity: 1; }
`;
const CaretUp = styled.span`
  border: 4px solid transparent;
  border-bottom: 5px solid #555;
  border-top: 0;
`;

/* ---------- context menu ---------- */

const Menu = styled.ul`
  position: absolute;
  z-index: 3;
  border: 1px solid #a0a0a0;
  padding: 2px;
  background: ${color.menu};
  box-shadow: 3px 3px 3px rgba(0, 0, 0, 0.55);
  color: #111;
`;
const RootMenu = styled(Menu)`
  left: 551px;
  top: 202px;
  width: 181px;
`;
const SubMenu = styled(Menu)`
  left: 172px;
  top: -3px;
  width: 202px;
`;
const MenuRow = styled.li`
  position: relative;
`;
const MenuButton = styled.button<{ $on?: boolean; $off?: boolean }>`
  display: flex;
  align-items: center;
  width: 100%;
  height: 20px;
  padding: 0 8px 0 2px;
  text-align: left;
  white-space: nowrap;
  color: ${(p) => (p.$on ? "#fff" : p.$off ? "#9d9d9d" : "#111")};
  background: ${(p) => (p.$on ? color.select : "transparent")};
  kbd {
    margin-left: auto;
    padding-top: 2px;
    font: inherit;
  }
  u { text-underline-offset: 2px; }
`;
const MenuText = styled.span`
  padding-top: 2px;
`;
const IconSlot = styled.span`
  flex: none;
  width: 23px;
  height: 18px;
`;
const MenuLine = styled.li`
  height: 9px;
  padding: 4px 0 0 2px;
  &::before {
    content: "";
    display: block;
    height: 1px;
    background: #a0a0a0;
  }
`;
const SubArrow = styled.span`
  margin: 0 0 5px auto;
  border: 4px solid transparent;
  border-left: 4px solid currentColor;
  border-right: 0;
`;
const Mark = styled.span<{ $x: number; $y: number; $w: number; $h: number }>`
  position: absolute;
  z-index: 4;
  left: ${(p) => p.$x}px;
  top: ${(p) => p.$y}px;
  width: ${(p) => p.$w}px;
  height: ${(p) => p.$h}px;
  border: 3px solid #e0352a;
  border-radius: 4px;
  pointer-events: none;
`;

type Item = { text?: ReactNode; icon?: string; keys?: string; off?: boolean; sub?: boolean; on?: boolean; rule?: boolean };

const rootItems: Item[] = [
  { text: <>重复粘贴(<u>R</u>)</> },
  { text: "最近的输入", sub: true },
  { rule: true },
  { text: "剪贴板", sub: true, on: true },
  { rule: true },
  { text: <>隔离(<u>I</u>)</>, sub: true },
  { rule: true },
  { text: <>放弃(<u>U</u>) 粘贴ctrl+v</>, icon: "mUndo" },
  { text: <>重做(<u>R</u>)</>, icon: "mRedo", keys: "Ctrl+Y", off: true },
  { text: <>平移(<u>A</u>)</>, icon: "mPan" },
  { text: <>缩放(<u>Z</u>)</>, icon: "mZoom" },
  { text: "SteeringWheels", icon: "mWheel" },
  { rule: true },
  { text: "动作录制器", sub: true },
  { rule: true },
  { text: "子对象选择过滤器", sub: true },
  { text: <>快速选择(<u>Q</u>)...</>, icon: "mQuick" },
  { text: "快速计算器", icon: "mCalc" },
  { text: "计数", icon: "mCount" },
  { text: <>查找(<u>F</u>)...</>, icon: "mFind" },
  { text: <>选项(<u>O</u>)...</>, icon: "mOptions" },
];
const clipItems: Item[] = [
  { text: <>剪切(<u>T</u>)</>, icon: "mCut", keys: "Ctrl+X" },
  { text: "带基点剪切", icon: "mCutBase", keys: "Ctrl+Shift+X" },
  { text: <>复制(<u>C</u>)</>, icon: "mCopy", keys: "Ctrl+C" },
  { text: <>带基点复制(<u>B</u>)</>, icon: "mCopyBase", keys: "Ctrl+Shift+C" },
  { text: <>粘贴(<u>P</u>)</>, icon: "mPaste", keys: "Ctrl+V", on: true },
  { text: <>粘贴为块(<u>K</u>)</>, icon: "mBlock", keys: "Ctrl+Shift+V", off: true },
  { text: "粘贴为超链接", icon: "mLink" },
  { text: <>粘贴到原坐标(<u>D</u>)</>, icon: "mOrig", off: true },
  { text: "选择性粘贴...", icon: "mSpecial" },
];

const MenuContent = ({ item }: { item: Item }) => (
  <MenuButton role="menuitem" $on={item.on} $off={item.off}>
    <IconSlot>{item.icon && <Icon name={item.icon} />}</IconSlot>
    <MenuText>{item.text}</MenuText>
    {item.keys && <kbd>{item.keys}</kbd>}
    {item.sub && <SubArrow />}
  </MenuButton>
);

const ContextMenu = () => (
  <RootMenu role="menu">
    {rootItems.map((item, i) =>
      item.rule ? (
        <MenuLine key={i} role="separator" />
      ) : (
        <MenuRow key={i}>
          <MenuContent item={item} />
          {item.on && (
            <>
              <SubMenu role="menu">
                {clipItems.map((c, j) => (
                  <MenuRow key={j}>
                    <MenuContent item={c} />
                    {c.on && <Mark $x={3} $y={-2} $w={93} $h={28} />}
                  </MenuRow>
                ))}
              </SubMenu>
              <Mark $x={-10} $y={-7} $w={133} $h={36} />
            </>
          )}
        </MenuRow>
      )
    )}
  </RootMenu>
);

/* ---------- status bar ---------- */

const StatusBar = styled.footer`
  display: flex;
  justify-content: space-between;
  align-items: flex-start;
  height: 29px;
  padding-right: 4px;
`;
const StatusGroups = styled.div`
  display: flex;
  gap: 3px;
  padding-top: 3px;
`;
const StatusGroup = styled.div`
  display: flex;
  align-items: center;
  gap: 1px;
  height: 25px;
  padding: 0 1px;
  background: ${color.slate};
`;
const StatusButton = styled.button<{ $on?: boolean; $w?: number }>`
  display: flex;
  align-items: center;
  justify-content: center;
  width: ${(p) => p.$w ?? 22}px;
  height: 23px;
  background: ${(p) => (p.$on ? color.accent : "transparent")};
  white-space: nowrap;
`;
const StatusDrop = styled(StatusButton)`
  width: 15px;
  padding-left: 2px;
`;
const S = ({ n, on }: { n: string; on?: boolean }) => (
  <StatusButton aria-label={n} aria-pressed={!!on} $on={on}><Icon name={n} /></StatusButton>
);
const SDrop = () => <StatusDrop aria-label="options"><Caret /></StatusDrop>;

const menus = ["文件(F)", "编辑(E)", "视图(V)", "插入(I)", "格式(O)", "工具(T)", "绘图(D)", "标注(N)", "修改(M)", "参数(P)", "扩展工具(X)", "窗口(W)", "帮助(H)"];

export default function App() {
  return (
    <Window>
      <GlobalStyle />
      <TitleBar>
        <QuickAccess>
          <AppButton aria-label="AutoCAD">
            <Svg width="23" height="22" viewBox="0 0 23 22">
              <path d="M0 2l4-1h17l2 2v18H2l-2-2z" fill="#7d0d2a" />
              <path d="M0 2l4-1v16l-4 3z" fill="#f06a8c" />
              <path d="M4 1h17v16H4z" fill="#e0144c" />
              <Letters x={8} y={14} s={14} c="#fff">A</Letters>
            </Svg>
          </AppButton>
          <QuickButton $w={17} aria-label="app menu"><Caret /></QuickButton>
          {["new", "open", "save", "saveAs", "print", "undo"].map((n) => (
            <QuickButton key={n} aria-label={n}><Icon name={n} /></QuickButton>
          ))}
          <QuickButton $w={12} aria-label="undo list"><Caret /></QuickButton>
          <QuickButton aria-label="redo"><Icon name="redoDim" /></QuickButton>
          <QuickButton $w={12} aria-label="redo list"><Caret $c="#7d838b" /></QuickButton>
          <QuickButton $w={18} aria-label="customize">
            <Svg width="9" height="8" viewBox="0 0 9 8"><path d="M0 0h9v1H0zM.5 3h8l-4 4z" fill={W} /></Svg>
          </QuickButton>
        </QuickAccess>
        <Title><span>Autodesk AutoCAD 2024</span><span>Drawing1.dwg</span></Title>
        <WindowControls $w={46}>
          <button aria-label="minimize"><Icon name="winMin" /></button>
          <button aria-label="maximize"><Icon name="winMax" /></button>
          <button aria-label="close"><Icon name="winClose" /></button>
        </WindowControls>
      </TitleBar>
      <MenuBar>
        <ul>{menus.map((m) => <li key={m}><button>{m}</button></li>)}</ul>
        <WindowControls $w={32}>
          <button aria-label="minimize drawing"><Icon name="winMin" /></button>
          <button aria-label="restore drawing"><Icon name="winRestore" /></button>
          <button aria-label="close drawing"><Icon name="winClose" /></button>
        </WindowControls>
      </MenuBar>
      <FileTabs>
        <Burger aria-label="file menu"><Icon name="sMenu" /></Burger>
        <FileTab $w={111} $pad={9}><span>Drawing1*</span><Icon name="close" /></FileTab>
        <AddTab aria-label="new drawing"><Icon name="plus" /></AddTab>
        <Slash />
      </FileTabs>

      <Body>
        <ToolbarRows>
          <ToolbarRow $gap={3}>
            <Panel role="toolbar"><Grip /><Tools names={standardTools} /></Panel>
            <Panel role="toolbar">
              <Grip />
              <Tools names={["textStyle"]} />
              <ComboBox label="Text style" value="Standard" w={120} pad={18} />
              <Tools names={["|", "dimStyle"]} />
              <ComboBox label="Dimension style" value="ISO-25" w={120} pad={18} />
              <Tools names={["|", "tableStyle"]} />
              <ComboBox label="Table style" value="Standard" w={120} pad={4} />
              <Tools names={["|", "leaderStyle"]} />
              <ComboBox label="Leader style" value="Standard" w={120} pad={18} />
            </Panel>
          </ToolbarRow>
          <ToolbarRow $gap={1}>
            <Panel role="toolbar">
              <Grip />
              <Tools names={["layerProps"]} />
              <ComboBox label="Layer" value="0" w={300} pad={2}>
                <LayerMarks>
                  <Icon name="bulb" /><Icon name="sunBig" /><Icon name="frame" /><Icon name="lock" />
                </LayerMarks>
                <Swatch />
              </ComboBox>
              <Tools names={["layerCur", "layerPrev", "layerState"]} />
            </Panel>
            <Panel role="toolbar">
              <Grip />
              <ComboBox label="Color" value="ByLayer" w={150}><Swatch /></ComboBox>
              <Separator />
              <ComboBox label="Linetype" value="ByLayer" w={160} pad={4}><Stroke $w={60} /></ComboBox>
              <Separator />
              <ComboBox label="Lineweight" value="ByLayer" w={125} pad={4}><Stroke $w={35} /></ComboBox>
              <Separator />
              <ComboBox label="Plot style" value="ByColor" w={120} pad={9} off />
            </Panel>
            <Panel role="toolbar" $grow><Grip /><Tools names={dimTools} /></Panel>
          </ToolbarRow>
        </ToolbarRows>

        <Workspace>
          <Rail $w={29} $side="left">
            <Panel role="toolbar" $vertical><Grip $vertical /><RailTools names={drawTools} bleed /></Panel>
          </Rail>
          <Canvas>
            <ViewLabel>[−][俯视][二维线框]</ViewLabel>
            <Ucs width="80" height="80" viewBox="0 0 80 80" aria-label="UCS">
              <path d="M8.500 21v50.500H60M4.500 67.500h9v9h-9zM10 4l6 6 6-6M16 10v7M63 57l13 13M76 57L63 70" fill="none" stroke="#fff" />
            </Ucs>
            <CommandBar>
              <CommandHandle>
                <CommandGrip />
                <button type="button" aria-label="close command line"><Icon name="close" /></button>
                <button type="button" aria-label="customize"><Icon name="wrench" /></button>
              </CommandHandle>
              <CommandField>
                <Icon name="prompt" />
                <Caret $c="#555" />
                <input aria-label="Command" placeholder="键入命令" />
                <CaretUp />
              </CommandField>
            </CommandBar>
            <Watermark>www.dgrai.com</Watermark>
            <ContextMenu />
          </Canvas>
          <Rail $w={32} $side="right">
            <Panel role="toolbar" $vertical><Grip $vertical /><RailTools names={modifyTools} /></Panel>
            <Panel role="toolbar" $vertical><Grip $vertical /><RailTools names={orderTools} /></Panel>
          </Rail>
        </Workspace>
      </Body>

      <StatusBar>
        <FileTabs $bottom>
          <Burger aria-label="layout menu"><Icon name="sMenu" /></Burger>
          <FileTab $w={58}>模型</FileTab>
          <LayoutTab>布局1</LayoutTab>
          <Slash />
          <LayoutTab>布局2</LayoutTab>
          <Slash />
          <AddTab aria-label="new layout"><Icon name="plus" /></AddTab>
          <Slash />
        </FileTabs>
        <StatusGroups>
          <StatusGroup><StatusButton $w={25}>模型</StatusButton></StatusGroup>
          <StatusGroup><S n="sGrid" on /><S n="sSnap" /><SDrop /></StatusGroup>
          <StatusGroup><S n="sOrtho" /><S n="sPolar" on /><SDrop /><S n="sIso" /><SDrop /></StatusGroup>
          <StatusGroup><S n="sTrack" on /><S n="sOsnap" on /><SDrop /></StatusGroup>
          <StatusGroup>
            <S n="sAnno" on /><S n="sAuto" /><S n="sScale" />
            <StatusButton $w={18}>1:1</StatusButton><SDrop />
          </StatusGroup>
          <StatusGroup><S n="sGear" /><SDrop /></StatusGroup>
          <StatusGroup><S n="sPlus" /></StatusGroup>
          <StatusGroup><S n="sShapes" /></StatusGroup>
          <StatusGroup><S n="sFull" /></StatusGroup>
          <StatusGroup><S n="sMenu" /></StatusGroup>
        </StatusGroups>
      </StatusBar>
    </Window>
  );
}
